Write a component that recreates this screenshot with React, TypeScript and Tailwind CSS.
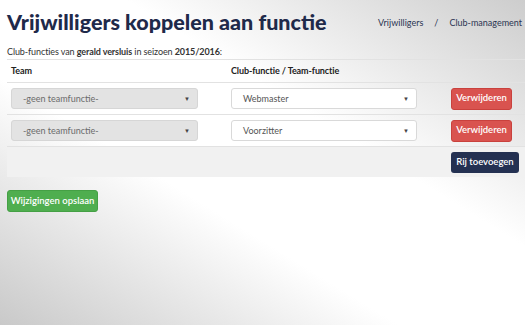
const rows = [
  { team: "-geen teamfunctie-", club: "Webmaster" },
  { team: "-geen teamfunctie-", club: "Voorzitter" },
];

function FakeSelect({ value, disabled }: { value: string; disabled?: boolean }) {
  return (
    <div
      className={
        "flex h-[21px] items-center justify-between rounded-[3px] border pl-[11px] pr-[7px] text-[9px] " +
        (disabled
          ? "border-[#d6d6d6] bg-[#e3e3e3] text-[#6b6b6b]"
          : "border-[#d9d9d9] bg-white text-[#555]")
      }
    >
      <span className="whitespace-nowrap">{value}</span>
      <span className="text-[6px] text-[#444]">▼</span>
    </div>
  );
}

export default function App() {
  return (
    <div
      className="h-[325px] w-[525px] overflow-hidden bg-[linear-gradient(to_bottom_left,#cdcdcd_0%,#ffffff_38%,#ffffff_62%,#c9c9c9_100%)] text-[#222a3f]"
      style={{ fontFamily: 'Lato, "Liberation Sans", sans-serif' }}
    >
      <div className="flex items-start justify-between pl-[7px] pr-[3px] pt-[7px]">
        <h1 className="whitespace-nowrap text-[21.5px] leading-[30px] font-black text-[#1f2a4a]">
          Vrijwilligers koppelen aan functie
        </h1>
        <div className="flex shrink-0 gap-[11px] whitespace-nowrap pt-[9px] text-[9px] text-[#2b3552]">
          <span>Vrijwilligers</span>
          <span>/</span>
          <span>Club-management</span>
        </div>
      </div>

      <p className="mt-[8px] whitespace-nowrap pl-[7px] text-[9px] leading-[14px] tracking-[-0.1px] text-[#333]">
        Club-functies van <b>gerald versluis</b> in seizoen <b>2015/2016</b>:
      </p>

      <div className="ml-[7px] w-[518px]">
        <div className="grid h-[23px] grid-cols-[220px_220px_1fr] items-center border-t border-[#e2e2e2] text-[9px] font-bold tracking-[-0.1px] text-[#222]">
          <span className="pl-[4px]">Team</span>
          <span className="pl-[4px]">Club-functie / Team-functie</span>
          <span />
        </div>
        {rows.map((r, i) => (
          <div
            key={i}
            className="grid h-[32px] grid-cols-[220px_220px_1fr] items-center border-t border-[#e2e2e2]"
          >
            <div className="pl-[4px] pr-[29px]">
              <FakeSelect value={r.team} disabled />
            </div>
            <div className="pl-[4px] pr-[30px]">
              <FakeSelect value={r.club} />
            </div>
            <div className="flex pl-[4px]">
              <button className="flex h-[22px] w-[61px] items-center justify-center whitespace-nowrap rounded-[3px] border border-[#c9413d] bg-[#d9534f] text-[9.5px] font-semibold text-white">
                Verwijderen
              </button>
            </div>
          </div>
        ))}
        <div className="grid h-[31px] grid-cols-[220px_220px_1fr] items-center border-t border-[#e2e2e2] bg-[#f1f1f1]">
          <span />
          <span />
          <div className="flex pl-[4px]">
            <button className="flex h-[21px] w-[68px] items-center justify-center whitespace-nowrap rounded-[3px] bg-[#243152] text-[9.5px] font-semibold text-white">
              Rij toevoegen
            </button>
          </div>
        </div>
      </div>

      <div className="flex pl-[7px] pt-[13px]">
        <button className="flex h-[22px] w-[91px] items-center justify-center whitespace-nowrap rounded-[3px] border border-[#45a045] bg-[#4fae4f] text-[9.5px] font-semibold text-white">
          Wijzigingen opslaan
        </button>
      </div>
    </div>
  );
}
